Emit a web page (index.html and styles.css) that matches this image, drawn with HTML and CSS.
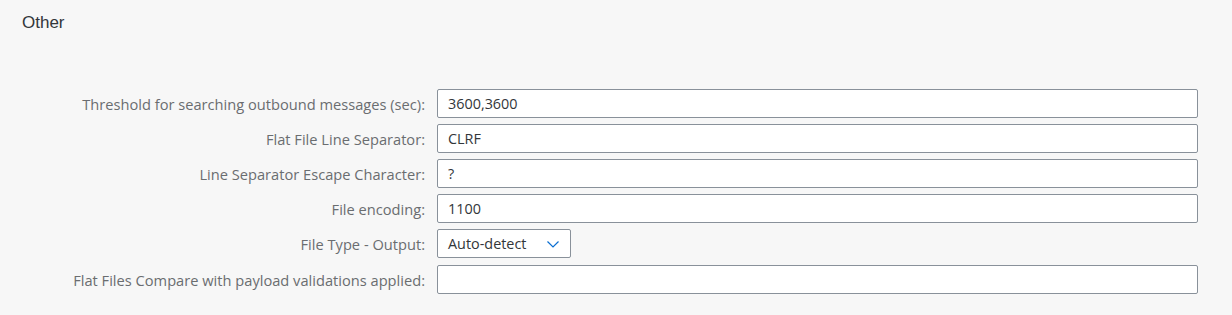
FILE: index.html
```html
<!DOCTYPE html>
<html lang="en">
<head>
    <meta charset="UTF-8">
    <title>Other</title>
    <link rel="stylesheet" href="styles.css">
</head>
<body>
    <div class="section">
        <h2 class="title">Other</h2>
        <div class="form">
            <label class="label" for="threshold">Threshold for searching outbound messages (sec):</label>
            <div class="field"><input class="input" id="threshold" value="3600,3600"></div>

            <label class="label" for="separator">Flat File Line Separator:</label>
            <div class="field"><input class="input" id="separator" value="CLRF"></div>

            <label class="label" for="escape">Line Separator Escape Character:</label>
            <div class="field"><input class="input" id="escape" value="?"></div>

            <label class="label" for="encoding">File encoding:</label>
            <div class="field"><input class="input" id="encoding" value="1100"></div>

            <label class="label" for="filetype">File Type - Output:</label>
            <div class="field">
                <div class="select" id="filetype">
                    <span>Auto-detect</span>
                    <svg class="arrow" width="14" height="14" viewBox="0 0 14 14"><path d="M1.5 4.5 L7 10 L12.5 4.5" fill="none" stroke="#0a6ed1" stroke-width="1.2"/></svg>
                </div>
            </div>

            <label class="label last" for="compare">Flat Files Compare with payload validations applied:</label>
            <div class="field last"><input class="input" id="compare" value=""></div>
        </div>
    </div>
</body>
</html>
```

FILE: styles.css
```css
body {
    margin: 0;
    background-color: #f7f7f7;
    font-family: "Liberation Sans", Arial, sans-serif;
}
.section {
    padding: 12px 34px 0 22px;
}
.title {
    margin: 0;
    font-size: 17px;
    font-weight: normal;
    color: #32363a;
    line-height: 22px;
}
.form {
    display: grid;
    grid-template-columns: 403px 1fr;
    column-gap: 12px;
    row-gap: 6px;
    margin-top: 55px;
    align-items: center;
}
.label {
    text-align: right;
    font-family: "Open Sans", sans-serif;
    font-size: 14.65px;
    color: #6a6d70;
}
.last {
    margin-top: 1px;
}
.input {
    display: block;
    width: 100%;
    box-sizing: border-box;
    height: 29px;
    padding: 0 9px 0 10px;
    border: 1px solid #89919a;
    border-radius: 2px;
    background: #fff;
    font-family: "Open Sans", sans-serif;
    font-size: 14.4px;
    color: #32363a;
}
.select {
    display: flex;
    align-items: center;
    justify-content: space-between;
    width: 134px;
    height: 29px;
    box-sizing: border-box;
    padding: 0 10px 0 10px;
    border: 1px solid #89919a;
    border-radius: 2px;
    background: #fff;
    font-family: "Open Sans", sans-serif;
    font-size: 14.4px;
    color: #32363a;
}
```
